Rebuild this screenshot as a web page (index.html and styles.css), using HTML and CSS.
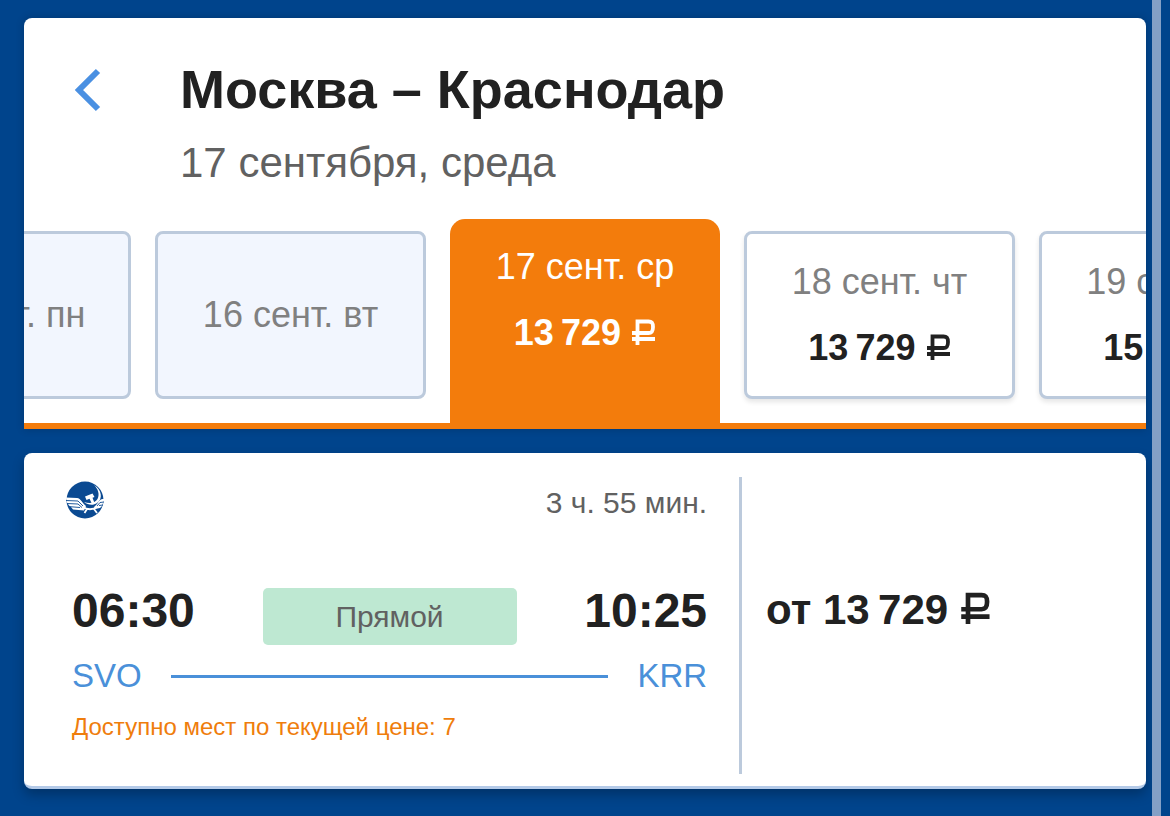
FILE: index.html
```html
<!DOCTYPE html>
<html lang="ru">
<head>
    <meta charset="UTF-8">
    <meta name="viewport" content="width=device-width, initial-scale=1.0">
    <title>Москва – Краснодар</title>
    <link rel="stylesheet" href="styles.css">
</head>
<body>
    <svg class="sprite" aria-hidden="true">
        <symbol id="rub" viewBox="0 0 24 26">
            <path d="M5.500 26V2.500H16.500C20 2.500 21 4 21 8S20 14 16.500 14H0M0 20H23" fill="none" stroke="currentColor" stroke-width="3.800"/>
        </symbol>
    </svg>
    <main class="page">
        <!-- шапка с датами -->
        <section class="search">
            <div class="search_top">
                <button class="back" type="button" aria-label="Назад">
                    <svg width="28" height="44" viewBox="0 0 28 44">
                        <path d="M25 3L6 22L25 41" fill="none" stroke="#4a90e2" stroke-width="6"/>
                    </svg>
                </button>
                <div>
                    <h1 class="title">Москва – Краснодар</h1>
                    <p class="date">17 сентября, среда</p>
                </div>
            </div>
            <div class="days">
                <button class="day day_empty" type="button"><span>15 сент. пн</span></button>
                <button class="day day_empty" type="button"><span>16 сент. вт</span></button>
                <button class="day day_active" type="button">
                    <span>17 сент. ср</span>
                    <b class="price">13&#8201;729 <svg class="rub"><use href="#rub"/></svg></b>
                </button>
                <button class="day" type="button">
                    <span>18 сент. чт</span>
                    <b class="price">13&#8201;729 <svg class="rub"><use href="#rub"/></svg></b>
                </button>
                <button class="day" type="button">
                    <span>19 сент. пт</span>
                    <b class="price">15&#8201;729 <svg class="rub"><use href="#rub"/></svg></b>
                </button>
            </div>
        </section>
        <!-- рейс -->
        <section class="flight">
            <div class="info">
                <div class="info_top">
                    <svg class="logo" width="38" height="38" viewBox="0 0 38 38">
                        <circle cx="19" cy="19" r="18.5" fill="#0b4a92"/>
                        <!-- серп и молот -->
                        <path d="M28 4C36 9 37 18 31 22C27 25 22 24 18 21C24 23 29 22 31.500 18C34 13 32 8 28 4z" fill="#fff"/>
                        <path d="M19 15.500L26.500 12.500L28.500 16L26.500 16.800L28.500 22L26 23L23.500 17.800L20.500 19z" fill="#fff"/>
                        <!-- крылья -->
                        <path d="M0 16.500L11 17C15 17.500 16 22 20 25L18 29.500L7 28.500L5 26L3 24.500L1 21.500z" fill="#fff"/>
                        <path d="M38 18C34 18 33 20 31 23L28 26L29 28L34 27L36 25L37 22L38 19.500z" fill="#fff"/>
                        <path d="M0 19.500L12 20L17 25M1 22.500L12 23L16 26.500M4 25.700L14 26.500M38 21L34 21.500L31 25M37 24L33 24.500" fill="none" stroke="#0b4a92" stroke-width=".9"/>
                        <path d="M17 26C21 29 27 29 31 26M21 28L18.500 32M28 28L31 32" fill="none" stroke="#fff" stroke-width="1.800"/>
                    </svg>
                    <span class="duration">3 ч. 55 мин.</span>
                </div>
                <div class="times">
                    <time class="time">06:30</time>
                    <span class="direct">Прямой</span>
                    <time class="time">10:25</time>
                </div>
                <div class="route">
                    <a href="#">SVO</a>
                    <span class="line"></span>
                    <a href="#">KRR</a>
                </div>
                <p class="seats">Доступно мест по текущей цене: 7</p>
            </div>
            <div class="cost">
                <b class="price price_big">от 13&#8201;729 <svg class="rub"><use href="#rub"/></svg></b>
            </div>
        </section>
    </main>
    <div class="scroll"></div>
</body>
</html>
```

FILE: styles.css
```css
*{
    box-sizing: border-box;
}
body{
    margin: 0;
    background-color: #00448c;
    color: #212121;
    font-family: "Liberation Sans", Arial, sans-serif;
}
h1,p{
    margin: 0;
}
button{
    padding: 0;
    border: 0;
    background: none;
    font: inherit;
    cursor: pointer;
}
.sprite{
    position: absolute;
    width: 0;
    height: 0;
}
.page{
    padding: 18px 24px 24px;
}
.search,.flight{
    background-color: #fff;
}
.search{
    border-radius: 8px 8px 0 0;
    border-bottom: 6px solid #f37c0c;
    box-shadow: 0 0 8px rgba(0, 0, 0, .2);
}
.search_top{
    display: flex;
    align-items: flex-start;
    gap: 75px;
    padding: 39px 49px 32px;
}
.back{
    display: flex;
    align-items: center;
    height: 66px;
    width: 32px;
}
.title{
    font-size: 54px;
    line-height: 64px;
}
.date{
    margin-top: 18px;
    color: #616161;
    font-size: 42px;
    line-height: 48px;
}
/* лента дат */
.days{
    display: flex;
    justify-content: center;
    gap: 24px;
    overflow: hidden;
}
.day{
    display: flex;
    flex: none;
    flex-direction: column;
    align-items: center;
    justify-content: center;
    gap: 24px;
    width: 271px;
    height: 168px;
    margin: 12px 0 24px;
    border: 3px solid #bccadc;
    border-radius: 8px;
    background-color: #fff;
    box-shadow: 0 3px 5px rgba(0, 0, 0, .1);
    color: #808080;
    font-size: 36px;
    line-height: 42px;
}
.day_empty{
    background-color: #f2f6fe;
    box-shadow: none;
}
.day_active{
    width: 270px;
    height: 204px;
    margin: 0;
    padding-bottom: 42px;
    border: 0;
    border-radius: 15px 15px 0 0;
    background-color: #f37c0c;
    box-shadow: none;
    color: #fff;
}
.price{
    color: #212121;
    white-space: nowrap;
}
.day_active .price{
    color: #fff;
}
.rub{
    width: 24px;
    height: 26px;
    margin-left: 1px;
}
/* карточка рейса */
.flight{
    display: flex;
    margin-top: 24px;
    padding: 24px 0 12px;
    border-bottom: 3px solid #b4cae8;
    border-radius: 8px;
    box-shadow: 0 6px 12px rgba(0, 0, 0, .25);
}
.info{
    flex: 0 0 64%;
    padding: 0 32px 31px 48px;
    border-right: 3px solid #bccadc;
}
.info_top{
    display: flex;
    align-items: flex-start;
    justify-content: space-between;
    margin-left: -6px;
    padding-top: 4px;
}
.duration{
    color: #616161;
    font-size: 30px;
    line-height: 44px;
}
.times{
    display: flex;
    justify-content: space-between;
    margin-top: 63px;
}
.time{
    font-size: 48px;
    font-weight: bold;
    line-height: 45px;
}
.direct{
    width: 40%;
    border-radius: 5px;
    background-color: #bee8d2;
    color: #616161;
    font-size: 30px;
    line-height: 57px;
    text-align: center;
}
.route{
    display: flex;
    align-items: center;
    gap: 29px;
    margin-top: 11px;
    font-size: 33px;
    line-height: 40px;
}
.route a{
    color: #4a90d9;
    text-decoration: none;
}
.line{
    flex: 1;
    height: 3px;
    background-color: #4a90d9;
}
.seats{
    margin-top: 15px;
    color: #ef7d0c;
    font-size: 24px;
    line-height: 32px;
}
.cost{
    padding: 109px 24px 0;
}
.price_big{
    font-size: 42px;
    line-height: 48px;
}
.price_big .rub{
    width: 30px;
    height: 32px;
}
.scroll{
    position: fixed;
    top: 0;
    right: 9px;
    bottom: 0;
    width: 9px;
    background-color: #84a0c6;
}
```
